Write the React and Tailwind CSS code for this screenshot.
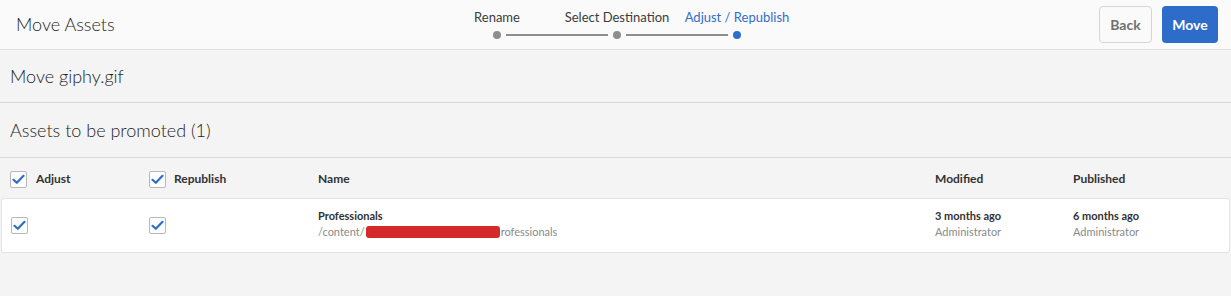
import React from "react";

const font = { fontFamily: "Lato, 'Open Sans', sans-serif" };

function Check() {
  return (
    <span className="flex h-[17px] w-[17px] shrink-0 items-center justify-center rounded-[2px] border border-[#b8b8b8] bg-[#fdfdfd]">
      <svg width="13" height="11" viewBox="0 0 13 11" fill="none">
        <path d="M1.5 5.8 L4.8 8.8 L11.5 1.8" stroke="#2c6ecb" strokeWidth="2.2" strokeLinecap="round" strokeLinejoin="round" />
      </svg>
    </span>
  );
}

function Step({ label, active }) {
  return (
    <div className="flex w-[120px] flex-col items-center">
      <span className={"text-[13px] leading-4 " + (active ? "text-[#326ec8]" : "text-[#3c3c3c]")}>{label}</span>
    </div>
  );
}

export default function App() {
  return (
    <div className="min-h-[296px] w-[1231px] bg-[#f4f4f4] text-[#323232]" style={font}>
      <header className="flex h-[50px] items-center border-b border-[#e1e1e1] bg-[#fafafa]">
        <div className="w-[437px] pl-4 text-[18px] font-light text-[#1e1e1e]">Move Assets</div>
        <div className="flex flex-col items-center pb-[1px]">
          <div className="flex">
            <Step label="Rename" />
            <Step label="Select Destination" />
            <Step label="Adjust / Republish" active />
          </div>
          <div className="mt-[6px] flex items-center">
            <span className="h-[8px] w-[8px] rounded-full bg-[#8e8e8e]" />
            <span className="mx-[5px] h-[2px] w-[102px] bg-[#8e8e8e]" />
            <span className="h-[8px] w-[8px] rounded-full bg-[#8e8e8e]" />
            <span className="mx-[5px] h-[2px] w-[102px] bg-[#8e8e8e]" />
            <span className="h-[8px] w-[8px] rounded-full bg-[#2c6ecb]" />
          </div>
        </div>
        <div className="ml-auto mr-[13px] flex gap-[10px]">
          <button className="h-[37px] w-[53px] rounded-[4px] border border-[#d6d6d6] bg-[#fafafa] text-[14px] font-bold text-[#707070]">Back</button>
          <button className="h-[37px] w-[56px] rounded-[4px] bg-[#2d6dc9] text-[14px] font-bold text-white">Move</button>
        </div>
      </header>
      <div className="flex h-[53px] items-center border-b border-[#d9d9d9] pl-[10px] text-[18px] font-light text-[#1e1e1e]">
        Move giphy.gif
      </div>
      <div className="flex h-[55px] items-center border-b border-[#d9d9d9] pl-[10px] text-[18px] font-light text-[#1e1e1e]">
        Assets to be promoted (1)
      </div>
      <div className="flex h-[40px] items-center pt-[2px] text-[12px] font-bold text-[#323232]">
        <div className="flex w-[149px] items-center gap-[9px] pl-[10px]"><Check />Adjust</div>
        <div className="flex w-[169px] items-center gap-[8px]"><Check />Republish</div>
        <div className="w-[617px]">Name</div>
        <div className="w-[138px]">Modified</div>
        <div>Published</div>
      </div>
      <div className="mx-[1px] flex h-[55px] items-center rounded-[3px] border border-[#e4e4e4] bg-white text-[11px]">
        <div className="w-[147px] pl-[9px]"><Check /></div>
        <div className="w-[169px]"><Check /></div>
        <div className="w-[617px] pb-[3px] leading-[16px]">
          <div className="font-bold text-[#323232]">Professionals</div>
          <div className="flex items-center text-[#8a8a8a]">
            /content/
            <span className="mx-[1px] inline-block h-[12px] w-[134px] rounded-[3px] bg-[#d42a2a]" />
            rofessionals
          </div>
        </div>
        <div className="w-[138px] pb-[3px] leading-[16px]">
          <div className="font-bold text-[#323232]">3 months ago</div>
          <div className="text-[#8a8a8a]">Administrator</div>
        </div>
        <div className="pb-[3px] leading-[16px]">
          <div className="font-bold text-[#323232]">6 months ago</div>
          <div className="text-[#8a8a8a]">Administrator</div>
        </div>
      </div>
    </div>
  );
}
